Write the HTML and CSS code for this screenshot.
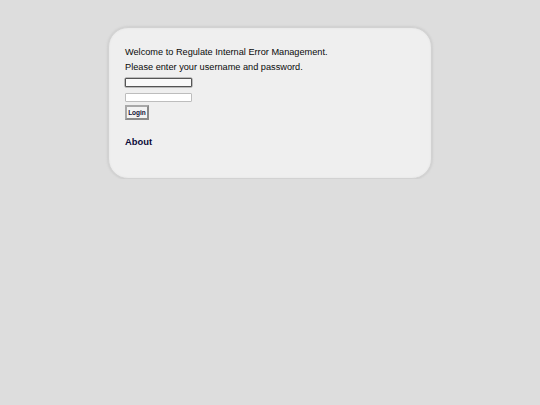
FILE: index.html
```html
<!DOCTYPE html>
<html>
<head>
<meta charset="utf-8">
<link rel="stylesheet" href="styles.css">
</head>
<body>
<div class="card">
  <p class="line">Welcome to Regulate Internal Error Management.</p>
  <p class="line">Please enter your username and password.</p>
  <form class="login">
    <input class="field focused" type="text">
    <input class="field" type="password">
    <button class="btn" type="button">Login</button>
  </form>
  <a class="about" href="#">About</a>
</div>
</body>
</html>
```
FILE: styles.css
```css
html, body {
  margin: 0;
  padding: 0;
  background: #dddddd;
  font-family: "Liberation Sans", Arial, sans-serif;
}
.card {
  box-sizing: border-box;
  margin: 27px 0 0 108px;
  width: 324px;
  height: 152px;
  border-radius: 20px;
  background: #efefef;
  border: 1px solid #d2d2d2;
  box-shadow: 0 0 2px 1px #cfcfcf, inset 0 0 2px #e0e0e0;
  padding: 17px 16px 16px;
  display: flex;
  flex-direction: column;
  align-items: flex-start;
}
.line {
  margin: 0;
  font-size: 9.2px;
  line-height: 15px;
  color: #0a0a0a;
}
.login {
  display: flex;
  flex-direction: column;
  align-items: flex-start;
  margin-top: 3px;
}
.field {
  box-sizing: border-box;
  width: 67px;
  height: 9px;
  margin: 0;
  padding: 0;
  background: #fff;
  border: 1px solid #bdbdbd;
  border-radius: 1px;
}
.field.focused {
  border: 1px solid #555;
  box-shadow: 0 0 0 0.5px #888;
  background: #fafafa;
}
.field + .field {
  margin-top: 6px;
}
.btn {
  box-sizing: border-box;
  margin-top: 3px;
  width: 24px;
  height: 15px;
  padding: 0;
  font-family: "Liberation Sans", Arial, sans-serif;
  font-size: 6.5px;
  font-weight: bold;
  color: #111133;
  background: #f3f3f3;
  border: 2px solid #8a8a8a;
  border-top-color: #a8a8a8;
  border-left-color: #a8a8a8;
}
.about {
  margin-top: 14px;
  font-size: 9.4px;
  line-height: 15px;
  font-weight: bold;
  color: #0b0b3a;
  text-decoration: none;
}
```
